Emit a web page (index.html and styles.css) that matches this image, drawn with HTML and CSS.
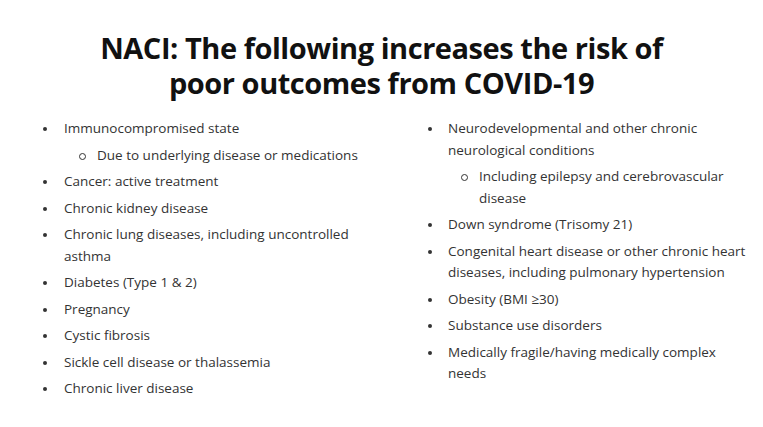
FILE: index.html
```html
<!DOCTYPE html>
<html>
<head>
<meta charset="utf-8">
<link rel="stylesheet" href="styles.css">
</head>
<body>
<div class="slide">
  <h1 class="title">NACI: The following increases the risk of<br>poor outcomes from COVID-19</h1>
  <div class="cols">
    <ul class="list left">
      <li>Immunocompromised state
        <ul class="sub"><li>Due to underlying disease or medications</li></ul>
      </li>
      <li>Cancer: active treatment</li>
      <li>Chronic kidney disease</li>
      <li>Chronic lung diseases, including uncontrolled asthma</li>
      <li>Diabetes (Type 1 &amp; 2)</li>
      <li>Pregnancy</li>
      <li>Cystic fibrosis</li>
      <li>Sickle cell disease or thalassemia</li>
      <li>Chronic liver disease</li>
    </ul>
    <ul class="list right">
      <li>Neurodevelopmental and other chronic neurological conditions
        <ul class="sub"><li>Including epilepsy and cerebrovascular disease</li></ul>
      </li>
      <li>Down syndrome (Trisomy 21)</li>
      <li>Congenital heart disease or other chronic heart diseases, including pulmonary hypertension</li>
      <li>Obesity (BMI ≥30)</li>
      <li>Substance use disorders</li>
      <li>Medically fragile/having medically complex needs</li>
    </ul>
  </div>
</div>
</body>
</html>
```
FILE: styles.css
```css
html, body {
  margin: 0;
  padding: 0;
  background: #ffffff;
}
.slide {
  width: 763px;
  height: 427px;
  box-sizing: border-box;
  padding-top: 30px;
  font-family: "Open Sans", "Noto Sans", sans-serif;
  color: #333333;
}
.title {
  margin: 0;
  text-align: center;
  font-family: "Open Sans", sans-serif;
  font-weight: 700;
  font-size: 29px;
  line-height: 35px;
  color: #111111;
  letter-spacing: -0.45px;
}
.cols {
  display: flex;
  margin-top: 18px;
}
.list {
  list-style: none;
  margin: 0;
  padding: 0;
  font-size: 13.5px;
  line-height: 21.5px;
}
.list > li {
  position: relative;
  padding-left: 21px;
  margin-bottom: 5px;
}
.list > li::before {
  content: "";
  position: absolute;
  left: 0;
  top: 9px;
  width: 4px;
  height: 4px;
  border-radius: 50%;
  background: #333333;
}
.left {
  margin-left: 43px;
  width: 315px;
}
.right {
  margin-left: 70px;
  width: 325px;
}
.right > li {
  padding-left: 20px;
}
.sub {
  list-style: none;
  margin: 5px 0 0 0;
  padding: 0;
}
.sub > li {
  position: relative;
  padding-left: 33px;
}
.right .sub > li {
  padding-left: 31px;
}
.sub > li::before {
  content: "";
  position: absolute;
  left: 15px;
  top: 8px;
  width: 5px;
  height: 5px;
  border: 1px solid #333333;
  border-radius: 50%;
}
.right .sub > li::before {
  left: 13px;
}
```
